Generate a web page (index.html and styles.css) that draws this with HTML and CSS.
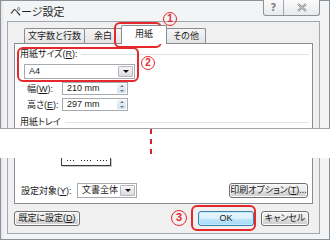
FILE: index.html
```html
<!DOCTYPE html>
<html lang="ja">
<head>
	<meta charset="UTF-8">
	<title>ページ設定</title>
	<link rel="stylesheet" href="styles.css">
</head>
<body>
	<!-- 上半分 -->
	<div class="piece top">
		<div class="win">
			<div class="titlebar">
				<span class="title">ページ設定</span>
				<div class="capbtns">
					<span class="cap help">?</span>
					<span class="cap close">
						<svg width="10" height="9" viewBox="0 0 10 9"><path d="M1 1 L9 8 M9 1 L1 8" stroke="#7d7f82" stroke-width="2.2" fill="none"/><path d="M1 1 L9 8 M9 1 L1 8" stroke="#f4f4f4" stroke-width="0.8" fill="none"/></svg>
					</span>
				</div>
			</div>
			<div class="client">
				<div class="tabs">
					<span class="tab t1">文字数と行数</span>
					<span class="tab t2">余白</span>
					<span class="tab sel">用紙</span>
					<span class="tab t4">その他</span>
				</div>
				<div class="panel">
					<div class="group"><span>用紙サイズ(<u>R</u>):</span></div>
					<div class="combo size"><span class="val">A4</span><span class="drop"></span></div>
					<div class="field"><label>幅(<u>W</u>):</label><div class="spin"><span class="val">210 mm</span><span class="arrows"></span></div></div>
					<div class="field"><label>高さ(<u>E</u>):</label><div class="spin"><span class="val">297 mm</span><span class="arrows"></span></div></div>
					<div class="group"><span>用紙トレイ</span></div>
				</div>
			</div>
		</div>
	</div>

	<div class="cut"></div>

	<!-- 下半分 -->
	<div class="piece bot">
		<div class="win">
			<div class="client">
				<div class="panel">
					<div class="preview"><i class="d1"></i><i class="d2"></i><i class="d3"></i></div>
					<div class="row">
						<div class="target">
							<label>設定対象(<u>Y</u>):</label>
							<div class="combo doc"><span class="val">文書全体</span><span class="drop"></span></div>
						</div>
						<span class="btn opt">印刷オプション(<u>T</u>)...</span>
					</div>
				</div>
				<div class="btnrow">
					<span class="btn dflt">既定に設定(<u>D</u>)</span>
					<span class="btn ok">OK</span>
					<span class="btn cancel">キャンセル</span>
				</div>
			</div>
		</div>
	</div>

	<!-- 赤い注釈 -->
	<div class="ring r-tab"></div>
	<div class="ring r-size"></div>
	<div class="ring r-ok"></div>
	<span class="num n1">1</span>
	<span class="num n2">2</span>
	<span class="num n3">3</span>
</body>
</html>
```
FILE: styles.css
```css
* { margin:0; padding:0; box-sizing:border-box; }
body { width:330px; height:240px; overflow:hidden; position:relative; background:#fff; color:#1a1a1a; font:9px/12px "Liberation Sans", "Noto Sans CJK JP", sans-serif; font-feature-settings:"palt"; }
u { text-decoration:underline; }

.piece { overflow:hidden; }
.top { height:129px; border-bottom:1px solid #a6a6a6; }
.bot { height:82px; }
.cut { height:29px; }
.cut::before { content:""; display:block; width:2px; height:27px; margin:0 0 0 150px; background:repeating-linear-gradient(#d2232f 0 5px, transparent 5px 10px); }

/* ウィンドウ枠 */
.win { width:330px; background:linear-gradient(90deg, #e4e7ea, #f3f4f6 4px); border:1px solid #8d9094; padding:0 9px 0 6px; }
.top .win { border-bottom:none; height:140px; }
.bot .win { border-top:none; height:82px; padding-bottom:5px; }

.titlebar { height:20px; display:flex; justify-content:space-between; align-items:flex-start; }
.title { font-size:11px; line-height:13px; margin:5px 0 0 3px; color:#222; }
.capbtns { display:flex; height:16px; margin-top:-1px; border:1px solid #8e9196; border-top:none; border-radius:0 0 3px 3px; background:linear-gradient(#fbfbfb, #e9eaec); }
.cap { display:flex; align-items:center; justify-content:center; height:15px; }
.help { width:20px; border-right:1px solid #a3a6aa; font:bold 10px/1 "DejaVu Sans", sans-serif; color:#808285; }
.close { width:35px; }

.client { border:1px solid #a3a6aa; background:#f0f0f0; padding:0 6px; }
.top .client { height:130px; }
.bot .client { border-top:none; height:76px; }

/* タブ */
.tabs { display:flex; align-items:flex-end; height:21px; padding-left:10px; }
.tab { height:15px; margin-left:-1px; border:1px solid #898c95; border-bottom:none; border-radius:2px 2px 0 0; background:linear-gradient(#f5f5f5, #e4e4e4); text-align:center; line-height:14px; }
.t1 { width:61px; margin-left:0; }
.t2 { width:38px; }
.sel { width:46px; height:19px; margin-bottom:-1px; position:relative; z-index:1; background:#fff; line-height:17px; }
.t4 { width:40px; }

.panel { border:1px solid #898c95; background:#fff; }
.top .panel { height:100px; }
.bot .panel { border-top:none; height:46px; }

.group { display:flex; align-items:center; gap:4px; height:12px; margin:4px 3px 0 5px; }
.group::after { content:""; flex:1; border-top:1px solid #dfe4e8; }
.field + .group { margin-top:5px; }

.combo { display:flex; height:15px; border:1px solid #a6aab1; background:#fff; }
.combo .val { flex:1; padding-left:4px; line-height:13px; }
.size { width:111px; margin:4px 0 0 9px; }
.drop { width:15px; margin:1px; border:1px solid #b4b8bd; border-radius:1px; background:linear-gradient(#f6f6f6, #dcdcdc); display:flex; align-items:center; justify-content:center; }
.drop::after { content:""; border:3px solid transparent; border-top:3px solid #111; border-bottom:none; }

.field { display:flex; align-items:center; margin:3px 0 0 12px; }
.field label { width:35px; }
.spin { display:flex; width:66px; height:13px; border:1px solid #a6aab1; background:#fff; }
.spin .val { flex:1; padding-left:4px; line-height:11px; }
.arrows { width:9px; margin:1px; background:linear-gradient(#eef3f8, #d7e1eb); display:flex; flex-direction:column; align-items:center; justify-content:space-around; }
.arrows::before { content:""; border:2px solid transparent; border-bottom:2px solid #5f7d9b; border-top:none; }
.arrows::after { content:""; border:2px solid transparent; border-top:2px solid #5f7d9b; border-bottom:none; }

/* 下半分 */
.preview { width:50px; height:8px; margin-left:46px; border:1px solid #3c3c3c; border-top:none; background:#fff; display:flex; gap:6px; padding:2px 0 0 5px; box-shadow:1px 1px 0 #c8c8c8; }
.preview i { height:1px; background:repeating-linear-gradient(90deg, #222 0 1px, transparent 1px 3px); }
.d1 { width:8px; }
.d2 { width:10px; }
.d3 { width:10px; }

.row { display:flex; justify-content:space-between; align-items:center; margin-top:17px; padding:0 4px 0 6px; }
.target { display:flex; align-items:center; }
.target label { width:56px; }
.doc { width:60px; }

.btn { height:15px; border:1px solid #707070; border-radius:3px; background:linear-gradient(#f3f3f3 0, #ebebeb 50%, #dddddd 50%, #cfcfcf 100%); box-shadow:inset 0 0 0 1px #fbfbfb; text-align:center; line-height:13px; }
.opt { width:79px; }
.btnrow { display:flex; margin-top:7px; padding-right:4px; }
.dflt { width:66px; }
.ok { width:56px; margin-left:auto; border-color:#3c7fb1; background:linear-gradient(#eaf6fd 0, #d9f0fc 50%, #bee6fd 50%, #a7d9f5 100%); box-shadow:inset 0 0 0 1px #c4eafc; }
.cancel { width:48px; margin-left:7px; }

/* 赤い注釈 */
.ring { position:absolute; border:2px solid #e5282c; border-radius:6px; }
.r-tab { left:114px; top:22px; width:48px; height:26px; }
.r-size { left:17px; top:47px; width:122px; height:35px; }
.r-ok { left:191px; top:205px; width:65px; height:26px; }
.num { position:absolute; width:14px; height:14px; border:1.5px solid #e5282c; border-radius:50%; color:#e5282c; font:bold 10px/11px "Liberation Sans", sans-serif; text-align:center; }
.n1 { left:163px; top:12px; }
.n2 { left:141px; top:56px; }
.n3 { left:171px; top:210px; width:16px; height:16px; line-height:13px; font-size:11px; }
```
